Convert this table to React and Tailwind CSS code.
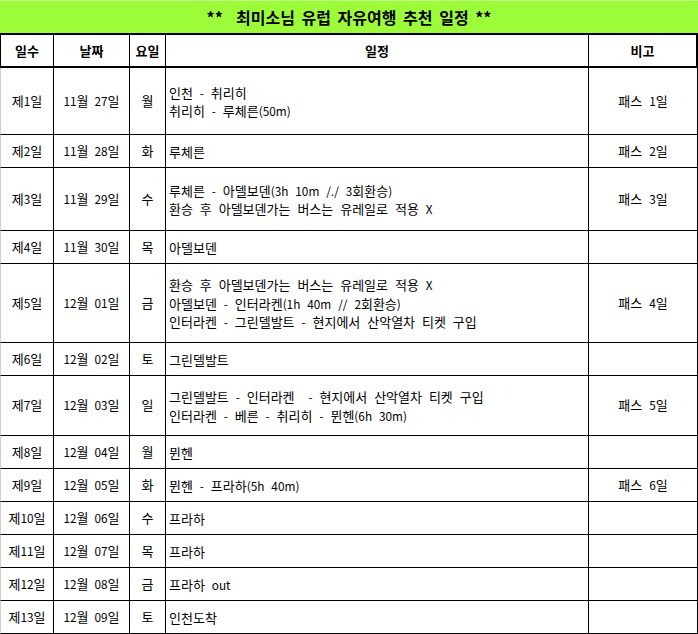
const rows = [
  { day: "제1일", date: "11월 27일", dow: "월", plan: ["인천 - 취리히", "취리히 - 루체른(50m)"], note: "패스 1일", h: "h-[67px]" },
  { day: "제2일", date: "11월 28일", dow: "화", plan: ["루체른"], note: "패스 2일", h: "h-[33px]" },
  {
    day: "제3일",
    date: "11월 29일",
    dow: "수",
    plan: ["루체른 - 아델보덴(3h 10m /./ 3회환승)", "환승 후 아델보덴가는 버스는 유레일로 적용 X"],
    note: "패스 3일",
    h: "h-[63px]",
  },
  { day: "제4일", date: "11월 30일", dow: "목", plan: ["아델보덴"], note: "", h: "h-[33px]" },
  {
    day: "제5일",
    date: "12월 01일",
    dow: "금",
    plan: [
      "환승 후 아델보덴가는 버스는 유레일로 적용 X",
      "아델보덴 - 인터라켄(1h 40m // 2회환승)",
      "인터라켄 - 그린델발트 - 현지에서 산악열차 티켓 구입",
    ],
    note: "패스 4일",
    h: "h-[79px]",
  },
  { day: "제6일", date: "12월 02일", dow: "토", plan: ["그린델발트"], note: "", h: "h-[33px]" },
  {
    day: "제7일",
    date: "12월 03일",
    dow: "일",
    plan: ["그린델발트 - 인터라켄  - 현지에서 산악열차 티켓 구입", "인터라켄 - 베른 - 취리히 - 뮌헨(6h 30m)"],
    note: "패스 5일",
    h: "h-[60px]",
  },
  { day: "제8일", date: "12월 04일", dow: "월", plan: ["뮌헨"], note: "", h: "h-[33px]" },
  { day: "제9일", date: "12월 05일", dow: "화", plan: ["뮌헨 - 프라하(5h 40m)"], note: "패스 6일", h: "h-[33px]" },
  { day: "제10일", date: "12월 06일", dow: "수", plan: ["프라하"], note: "", h: "h-[33px]" },
  { day: "제11일", date: "12월 07일", dow: "목", plan: ["프라하"], note: "", h: "h-[33px]" },
  { day: "제12일", date: "12월 08일", dow: "금", plan: ["프라하 out"], note: "", h: "h-[33px]" },
  { day: "제13일", date: "12월 09일", dow: "토", plan: ["인천도착"], note: "", h: "h-[33px]" },
]

const cols = "grid grid-cols-[54px_76px_36px_423px_109px]"
const cell = "flex items-center border-r border-b border-black"

// latin runs sit a little smaller next to hangul, like the spreadsheet font
const Mixed = ({ text }) =>
  text.split(/([A-Za-z0-9()./-]+)/).map((part, i) =>
    /^[A-Za-z0-9()./-]+$/.test(part) ? (
      <span key={i} className="text-[11.8px]">
        {part}
      </span>
    ) : (
      part
    ),
  )

const App = () => {
  return (
    <div
      className="w-[698px] bg-white text-black"
      style={{ fontFamily: '"Noto Sans CJK KR", "Noto Sans", sans-serif' }}
    >
      {/* title bar */}
      <div className="h-[33px] bg-[#9dfc3a] border-t border-[#c4fb90] flex items-center justify-center text-[16px] font-bold whitespace-pre [word-spacing:3px]">
        {"**  최미소님 유럽 자유여행 추천 일정 **"}
      </div>

      {/* column headers */}
      <div className={`${cols} h-[35px] border-y-2 border-black text-[13px] font-bold`}>
        <div className="flex items-center justify-center border-l border-[#cfcfcf] border-r border-black">일수</div>
        <div className="flex items-center justify-center border-r border-black">날짜</div>
        <div className="flex items-center justify-center border-r border-black">요일</div>
        <div className="flex items-center justify-center border-r border-black">일정</div>
        <div className="flex items-center justify-center border-r-2 border-black">비고</div>
      </div>

      {/* body */}
      {rows.map((r) => (
        <div key={r.day} className={`${cols} ${r.h} text-[13px] leading-[18.5px]`}>
          <div className={`${cell} justify-center border-l border-l-[#cfcfcf]`}>
            <span><Mixed text={r.day} /></span>
          </div>
          <div className={`${cell} justify-center [word-spacing:3px]`}>
            <span><Mixed text={r.date} /></span>
          </div>
          <div className={`${cell} justify-center`}>{r.dow}</div>
          <div className={`${cell} pl-[3px] [word-spacing:4px]`}>
            <div className="flex flex-col pt-[2px]">
              {r.plan.map((line, i) => (
                <span key={i} className="whitespace-pre">
                  <Mixed text={line} />
                </span>
              ))}
            </div>
          </div>
          <div className={`${cell} justify-center [word-spacing:4px]`}>
            <span><Mixed text={r.note} /></span>
          </div>
        </div>
      ))}
    </div>
  )
}

export default App
